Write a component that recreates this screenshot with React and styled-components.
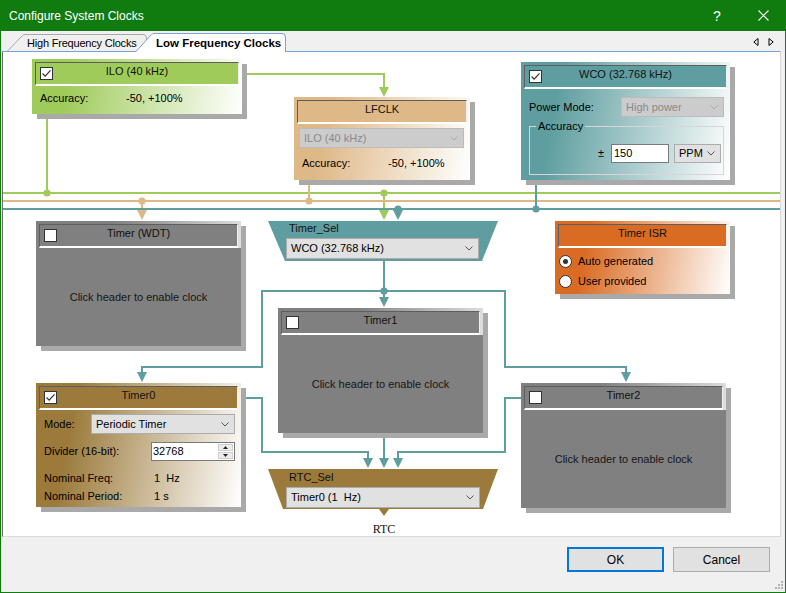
import React from 'react';
import styled, { createGlobalStyle } from 'styled-components';

const OX = 3;
const OY = 52;
const CW = 777;
const CH = 484;

const COL = {
  green: '#9fcb5b',
  tan: '#deb887',
  teal: '#5f9ea0',
  orange: '#d96b22',
  brown: '#9b7a3b',
  gray: '#808080',
  shadow: '#a9a9a9',
};

const Global = createGlobalStyle`
  html, body { margin: 0; padding: 0; overflow: hidden; background: #fff; }
  body { font-family: "Liberation Sans", Arial, sans-serif; }
  * { box-sizing: border-box; }
`;

const Window = styled.div`
  position: relative;
  width: 786px;
  height: 593px;
  display: flex;
  flex-direction: column;
  background: #f0f0f0;
  border: 1px solid #107c10;
  border-top: 0;
  font-family: "Liberation Sans", Arial, sans-serif;
`;

const TitleBar = styled.div`
  flex: none;
  height: 31px;
  margin: 0 -1px;
  background: #107c10;
  display: flex;
  align-items: center;
  color: #fff;
  font-size: 12px;
  padding-left: 9px;
`;

const Caption = styled.div`
  margin-left: auto;
  display: flex;
  height: 100%;
`;

const CapBtn = styled.div`
  width: 46px;
  height: 100%;
  display: flex;
  align-items: center;
  justify-content: center;
  color: #fff;
  font-size: 14px;
`;

const TabStrip = styled.div`
  flex: none;
  height: 20px;
  display: flex;
  align-items: flex-end;
  padding-left: 6px;
  position: relative;
  z-index: 2;
`;

const TabEl = styled.div`
  position: relative;
  width: ${p => p.$w}px;
  height: ${p => (p.$active ? 19 : 17)}px;
  margin-left: ${p => p.$ml || 0}px;
  margin-bottom: ${p => (p.$active ? -1 : 0)}px;
  padding-left: ${p => p.$pl}px;
  display: flex;
  align-items: center;
  font-size: ${p => (p.$active ? 11.5 : 11)}px;
  letter-spacing: ${p => (p.$active ? 0 : -0.2)}px;
  font-weight: ${p => (p.$active ? 700 : 400)};
  color: #000;
  z-index: ${p => (p.$active ? 2 : 1)};
  white-space: nowrap;
`;

const TabShape = styled.svg`
  position: absolute;
  left: 0;
  top: 0;
  z-index: -1;
  overflow: visible;
`;

const TabNav = styled.div`
  margin-left: auto;
  align-self: center;
  display: flex;
  gap: 9px;
  padding-right: 11px;
  padding-top: 1px;
`;

const Panel = styled.div`
  flex: none;
  height: 486px;
  margin: 0 4px 0 1px;
  border: 1px solid #dadada;
  border-top-color: #7ba1d8;
  border-left-color: #6d6d6d;
  background: #fff;
  position: relative;
  z-index: 1;
`;

const Canvas = styled.div`
  position: relative;
  width: ${CW}px;
  height: ${CH}px;
  overflow: hidden;
`;

const Wires = styled.svg`
  position: absolute;
  left: 0;
  top: 0;
`;

const Footer = styled.div`
  flex: 1;
  display: flex;
  justify-content: flex-end;
  align-items: flex-start;
  padding: 10px 15px 0 0;
  gap: 9px;
`;

const Button = styled.div`
  width: 97px;
  height: 25px;
  display: flex;
  align-items: center;
  justify-content: center;
  font-size: 12px;
  color: #000;
  background: #e1e1e1;
  border: ${p => (p.$default ? '2px solid #0078d7' : '1px solid #adadad')};
`;

const Grip = styled.svg`
  position: absolute;
  right: 1px;
  bottom: 2px;
`;

/* ---------- diagram nodes ---------- */

const Node = styled.div`
  position: absolute;
  left: ${p => p.$x - OX}px;
  top: ${p => p.$y - OY}px;
  width: ${p => p.$w}px;
  height: ${p => p.$h}px;
`;

const Card = styled(Node)`
  padding: 3px;
  display: flex;
  flex-direction: column;
  background: linear-gradient(100deg, ${p => p.$c} 18%, #ffffff 100%);
  box-shadow: 5px 5px 0 ${COL.shadow};
  font-size: 11px;
  line-height: 13px;
  color: #000;
`;

const GrayCard = styled(Card)`
  background: linear-gradient(100deg, #808080 35%, #ececec 100%);
`;

const Header = styled.div`
  flex: none;
  height: 24px;
  display: grid;
  grid-template-columns: 20px 1fr 20px;
  align-items: start;
  padding-top: 2px;
  background: ${p => p.$c};
  border-top: 1px solid #5e5e5e;
  border-left: 1px solid #5e5e5e;
  border-bottom: 2px solid #fff;
  border-right: 1px solid #f0f0f0;
  color: #111;
`;

const CheckSlot = styled.div`
  grid-column: 1;
  padding: 2px 0 0 4px;
`;

const HeaderTitle = styled.div`
  grid-column: 2;
  text-align: center;
  white-space: nowrap;
`;

const CB = styled.div`
  width: 13px;
  height: 13px;
  border: 1px solid #333;
  background: #fff;
  display: flex;
  align-items: center;
  justify-content: center;
`;

const CheckBox = ({ checked }) => (
  <CB>
    {checked && (
      <svg width="11" height="11" viewBox="0 0 11 11">
        <path d="M1.5 5.5 L4.2 8.2 L9.5 2.3" fill="none" stroke="#333" strokeWidth="1.2" />
      </svg>
    )}
  </CB>
);

const GrayBody = styled.div`
  flex: 1;
  margin: 0 -3px -3px;
  background: #808080;
  display: flex;
  align-items: center;
  justify-content: center;
  color: #161616;
`;

const InfoRow = styled.div`
  flex: none;
  display: grid;
  grid-template-columns: ${p => p.$label}px auto;
  height: 13px;
  margin-top: ${p => p.$mt || 0}px;
  padding-left: 5px;
  white-space: pre;
`;

const FieldRow = styled.div`
  flex: none;
  display: grid;
  grid-template-columns: ${p => p.$label}px 1fr;
  align-items: center;
  height: ${p => p.$h}px;
  margin-top: ${p => p.$mt || 0}px;
  padding: 0 3px 0 5px;
  white-space: nowrap;
`;

const ComboBox = styled.div`
  flex: none;
  height: ${p => p.$h || 20}px;
  width: ${p => (p.$w ? `${p.$w}px` : 'auto')};
  margin: ${p => p.$m || 0};
  border: 1px solid ${p => (p.$disabled ? '#bcbcbc' : '#acacac')};
  background: ${p => (p.$disabled ? '#cccccc' : '#e1e1e1')};
  color: ${p => (p.$disabled ? '#8a8a8a' : '#000')};
  display: flex;
  align-items: center;
  justify-content: space-between;
  padding: 0 5px 0 4px;
  font-size: 11px;
  white-space: pre;
`;

const Chevron = ({ disabled }) => (
  <svg width="8" height="5" viewBox="0 0 8 5">
    <path d="M0.5 0.5 L4 4 L7.5 0.5" fill="none" stroke={disabled ? '#a9a9a9' : '#555'} strokeWidth="1" />
  </svg>
);

const TextBox = styled.div`
  width: ${p => p.$w}px;
  height: 19px;
  background: #fff;
  border: 1px solid #7a7a7a;
  display: flex;
  align-items: center;
  padding-left: 2px;
  font-size: 11px;
`;

const Group = styled.fieldset`
  margin: 3px 3px 0 5px;
  height: 55px;
  padding: 0 2px 0 0;
  border: 1px solid #d6d6d6;
  min-width: 0;
  & > legend {
    margin-left: 6px;
    padding: 0 2px;
    font-size: 11px;
    line-height: 13px;
  }
`;

const GroupRow = styled.div`
  margin-top: 11px;
  display: flex;
  justify-content: flex-end;
  align-items: center;
  gap: 5px;
`;

const PlusMinus = styled.span`
  margin-right: 2px;
`;

const Spinner = styled.div`
  display: flex;
  height: 19px;
  background: #fff;
  border: 1px solid #7a7a7a;
`;

const SpinText = styled.div`
  flex: 1;
  display: flex;
  align-items: center;
  padding-left: 1px;
`;

const SpinButtons = styled.div`
  width: 17px;
  display: flex;
  flex-direction: column;
  gap: 1px;
  padding: 1px;
`;

const SpinBtn = styled.div`
  flex: 1;
  background: #ececec;
  border: 1px solid #cfcfcf;
  display: flex;
  align-items: center;
  justify-content: center;
`;

const RadioList = styled.div`
  margin-top: 7px;
  padding-left: 1px;
  display: flex;
  flex-direction: column;
  gap: 7px;
`;

const RadioRow = styled.label`
  display: flex;
  align-items: center;
  gap: 6px;
  height: 13px;
`;

const Radio = styled.span`
  width: 13px;
  height: 13px;
  border-radius: 50%;
  border: 1px solid #333;
  background: #fff;
  display: flex;
  align-items: center;
  justify-content: center;
  &::after {
    content: '';
    width: 5px;
    height: 5px;
    border-radius: 50%;
    background: ${p => (p.$on ? '#333' : 'transparent')};
  }
`;

const Mux = styled(Node)`
  background: ${p => p.$c};
  clip-path: ${p => p.$clip};
  padding: ${p => p.$pt}px 0 0 18px;
  display: flex;
  flex-direction: column;
  gap: 3px;
  font-size: 11px;
  line-height: 13px;
  color: #111;
`;

const MuxLabel = styled.div`
  padding-left: 3px;
`;

const PortLabel = styled(Node)`
  text-align: center;
  font-family: "Liberation Serif", "Times New Roman", serif;
  font-size: 12px;
  line-height: 14px;
  color: #111;
`;

/* ---------- wires ---------- */

const Arrow = ({ x, tip, c }) => (
  <polygon points={`${x - 5},${tip - 10} ${x + 5},${tip - 10} ${x},${tip}`} fill={c} />
);
const Dot = ({ x, y, c }) => <circle cx={x} cy={y} r={3.6} fill={c} />;

const WireLayer = () => (
  <Wires width={CW} height={CH} viewBox={`${OX} ${OY} ${CW} ${CH}`}>
    <g fill="none" strokeWidth="2">
      <g stroke={COL.green}>
        <path d="M47 112 V193" />
        <path d="M0 193 H790" />
        <path d="M240 74 H384 V88" />
        <path d="M384 193 V211" />
      </g>
      <g stroke={COL.tan}>
        <path d="M309 178 V201" />
        <path d="M0 201 H790" />
        <path d="M142 201 V211" />
      </g>
      <g stroke={COL.teal}>
        <path d="M536 178 V209" />
        <path d="M0 209 H790" />
        <path d="M398 209 V211" />
        <path d="M384 259 V298" />
        <path d="M142 373 V367 H262 V291 H505 V367 H626 V373" />
        <path d="M240 398 H262 V452 H368 V459" />
        <path d="M384 431 V459" />
        <path d="M523 398 H505 V452 H398 V459" />
      </g>
    </g>
    <Dot x={47} y={193} c={COL.green} />
    <Dot x={384} y={193} c={COL.green} />
    <Arrow x={384} tip={97} c={COL.green} />
    <Arrow x={384} tip={220} c={COL.green} />
    <Dot x={309} y={201} c={COL.tan} />
    <Dot x={142} y={201} c={COL.tan} />
    <Arrow x={142} tip={220} c={COL.tan} />
    <Dot x={536} y={209} c={COL.teal} />
    <Dot x={398} y={209} c={COL.teal} />
    <Arrow x={398} tip={220} c={COL.teal} />
    <Dot x={384} y={291} c={COL.teal} />
    <Arrow x={384} tip={307} c={COL.teal} />
    <Arrow x={142} tip={382} c={COL.teal} />
    <Arrow x={626} tip={382} c={COL.teal} />
    <Arrow x={368} tip={468} c={COL.teal} />
    <Arrow x={384} tip={468} c={COL.teal} />
    <Arrow x={398} tip={468} c={COL.teal} />
  </Wires>
);

const GrayTimer = ({ x, y, h, title }) => (
  <GrayCard $x={x} $y={y} $w={205} $h={h}>
    <Header $c={COL.gray}>
      <CheckSlot><CheckBox /></CheckSlot>
      <HeaderTitle>{title}</HeaderTitle>
    </Header>
    <GrayBody>Click header to enable clock</GrayBody>
  </GrayCard>
);

const Tri = ({ up }) => (
  <svg width="5" height="3" viewBox="0 0 5 3">
    <polygon points={up ? '0,3 5,3 2.5,0' : '0,0 5,0 2.5,3'} fill="#222" />
  </svg>
);

export default function App() {
  return (
    <>
      <Global />
      <Window>
        <TitleBar>
          Configure System Clocks
          <Caption>
            <CapBtn>?</CapBtn>
            <CapBtn>
              <svg width="11" height="11" viewBox="0 0 11 11">
                <path d="M0.5 0.5 L10.5 10.5 M10.5 0.5 L0.5 10.5" stroke="#fff" strokeWidth="1.1" />
              </svg>
            </CapBtn>
          </Caption>
        </TitleBar>

        <TabStrip>
          <TabEl $w={140} $pl={20}>
            <TabShape width="140" height="17">
              <path d="M0.5 17 L15.5 1.5 Q16.5 0.5 18 0.5 L136 0.5 Q139.5 0.5 139.5 4 L139.5 17" fill="#f0f0f0" stroke="#a9a9a9" />
            </TabShape>
            High Frequency Clocks
          </TabEl>
          <TabEl $w={151} $ml={-12} $pl={21} $active>
            <TabShape width="151" height="19">
              <path d="M0.5 19 L16.5 1.5 Q17.5 0.5 19 0.5 L147 0.5 Q150.5 0.5 150.5 4 L150.5 19" fill="#fff" stroke="#7ba1d8" />
            </TabShape>
            Low Frequency Clocks
          </TabEl>
          <TabNav>
            <svg width="6" height="8" viewBox="0 0 6 8">
              <polygon points="5,0.5 0.8,4 5,7.5" fill="none" stroke="#000" />
            </svg>
            <svg width="6" height="8" viewBox="0 0 6 8">
              <polygon points="1,0.5 5.2,4 1,7.5" fill="none" stroke="#000" />
            </svg>
          </TabNav>
        </TabStrip>

        <Panel>
          <Canvas>
            <WireLayer />

            <Card $x={32} $y={59} $w={210} $h={55} $c={COL.green}>
              <Header $c={COL.green}>
                <CheckSlot><CheckBox checked /></CheckSlot>
                <HeaderTitle>ILO (40 kHz)</HeaderTitle>
              </Header>
              <InfoRow $label={86} $mt={6}>
                <span>Accuracy:</span>
                <span>-50, +100%</span>
              </InfoRow>
            </Card>

            <Card $x={294} $y={97} $w={176} $h={83} $c={COL.tan}>
              <Header $c={COL.tan}>
                <HeaderTitle>LFCLK</HeaderTitle>
              </Header>
              <ComboBox $disabled $m="4px 3px 0 2px">
                ILO (40 kHz)
                <Chevron disabled />
              </ComboBox>
              <InfoRow $label={86} $mt={9}>
                <span>Accuracy:</span>
                <span>-50, +100%</span>
              </InfoRow>
            </Card>

            <Card $x={521} $y={62} $w={209} $h={118} $c={COL.teal}>
              <Header $c={COL.teal}>
                <CheckSlot><CheckBox checked /></CheckSlot>
                <HeaderTitle>WCO (32.768 kHz)</HeaderTitle>
              </Header>
              <FieldRow $label={92} $mt={8} $h={20}>
                <span>Power Mode:</span>
                <ComboBox $disabled>
                  High power
                  <Chevron disabled />
                </ComboBox>
              </FieldRow>
              <Group>
                <legend>Accuracy</legend>
                <GroupRow>
                  <PlusMinus>±</PlusMinus>
                  <TextBox $w={58}>150</TextBox>
                  <ComboBox $w={47} $h={19}>
                    PPM
                    <Chevron />
                  </ComboBox>
                </GroupRow>
              </Group>
            </Card>

            <GrayTimer x={36} y={221} h={125} title="Timer (WDT)" />

            <Mux
              $x={268}
              $y={221}
              $w={230}
              $h={40}
              $pt={1}
              $c={COL.teal}
              $clip="polygon(0 0, 230px 0, 214px 40px, 17px 40px)"
            >
              <MuxLabel>Timer_Sel</MuxLabel>
              <ComboBox $w={193} $h={21}>
                WCO (32.768 kHz)
                <Chevron />
              </ComboBox>
            </Mux>

            <Card $x={555} $y={221} $w={175} $h={73} $c={COL.orange}>
              <Header $c={COL.orange}>
                <HeaderTitle>Timer ISR</HeaderTitle>
              </Header>
              <RadioList>
                <RadioRow><Radio $on />Auto generated</RadioRow>
                <RadioRow><Radio />User provided</RadioRow>
              </RadioList>
            </Card>

            <GrayTimer x={278} y={308} h={125} title="Timer1" />

            <Card $x={36} $y={383} $w={205} $h={124} $c={COL.brown}>
              <Header $c={COL.brown}>
                <CheckSlot><CheckBox checked /></CheckSlot>
                <HeaderTitle>Timer0</HeaderTitle>
              </Header>
              <FieldRow $label={47} $mt={4} $h={20}>
                <span>Mode:</span>
                <ComboBox>
                  Periodic Timer
                  <Chevron />
                </ComboBox>
              </FieldRow>
              <FieldRow $label={107} $mt={8} $h={19}>
                <span>Divider (16-bit):</span>
                <Spinner>
                  <SpinText>32768</SpinText>
                  <SpinButtons>
                    <SpinBtn><Tri up /></SpinBtn>
                    <SpinBtn><Tri /></SpinBtn>
                  </SpinButtons>
                </Spinner>
              </FieldRow>
              <InfoRow $label={110} $mt={11}>
                <span>Nominal Freq:</span>
                <span>1  Hz</span>
              </InfoRow>
              <InfoRow $label={110} $mt={5}>
                <span>Nominal Period:</span>
                <span>1 s</span>
              </InfoRow>
            </Card>

            <GrayTimer x={521} y={383} h={125} title="Timer2" />

            <Mux
              $x={268}
              $y={469}
              $w={230}
              $h={47}
              $pt={2}
              $c={COL.brown}
              $clip="polygon(0 0, 230px 0, 215px 40px, 121px 40px, 116px 47px, 111px 40px, 15px 40px)"
            >
              <MuxLabel>RTC_Sel</MuxLabel>
              <ComboBox $w={194} $h={21}>
                Timer0 (1  Hz)
                <Chevron />
              </ComboBox>
            </Mux>

            <PortLabel $x={354} $y={522} $w={60} $h={14}>RTC</PortLabel>
          </Canvas>
        </Panel>

        <Footer>
          <Button $default>OK</Button>
          <Button>Cancel</Button>
        </Footer>

        <Grip width="9" height="9" viewBox="0 0 9 9">
          <g fill="#b5b5b5">
            <rect x="6" y="0" width="2" height="2" />
            <rect x="3" y="3" width="2" height="2" />
            <rect x="6" y="3" width="2" height="2" />
            <rect x="0" y="6" width="2" height="2" />
            <rect x="3" y="6" width="2" height="2" />
            <rect x="6" y="6" width="2" height="2" />
          </g>
        </Grip>
      </Window>
    </>
  );
}
